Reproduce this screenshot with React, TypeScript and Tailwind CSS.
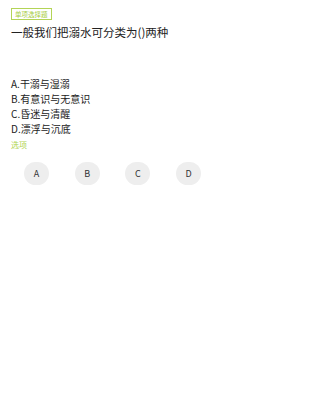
import React from 'react';

const options = [
  { key: 'A', text: '干溺与湿溺' },
  { key: 'B', text: '有意识与无意识' },
  { key: 'C', text: '昏迷与清醒' },
  { key: 'D', text: '漂浮与沉底' },
];

const font = { fontFamily: '"Noto Sans CJK SC", "Noto Sans", sans-serif' };

const App = () => {
  return (
    <div className="min-h-screen w-[225px] bg-white" style={font}>
      <div className="px-[11px] pt-[8px]">
        {/* Type badge */}
        <div className="flex">
          <span className="flex h-[12px] items-center border border-[#b3d456] px-[3px] text-[6.5px] leading-none text-[#a6cc3e]">
            单项选择题
          </span>
        </div>

        {/* Question */}
        <div className="mt-[4px] text-[11.5px] leading-[16px] text-[#222222]">
          一般我们把溺水可分类为()两种
        </div>

        {/* Options */}
        <div className="mt-[36px] flex flex-col">
          {options.map((o) => (
            <div key={o.key} className="text-[10px] leading-[15px] text-[#222222]">
              {o.key}.{o.text}
            </div>
          ))}
        </div>

        {/* Label */}
        <div className="mt-[3px] text-[8px] leading-[12px] text-[#b0d44e]">选项</div>

        {/* Answer buttons */}
        <div className="mt-[11px] grid grid-cols-4">
          {options.map((o) => (
            <div key={o.key} className="flex justify-center">
              <button className="flex h-[23px] w-[25px] items-center justify-center rounded-full bg-[#eeeeee] text-[9px] text-[#333333]">
                {o.key}
              </button>
            </div>
          ))}
        </div>
      </div>
    </div>
  );
};

export default App;
